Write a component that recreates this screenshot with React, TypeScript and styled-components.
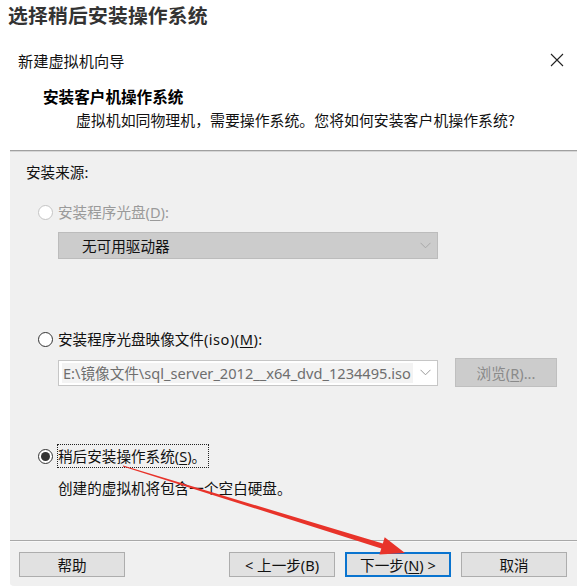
import React from "react";
import styled, { createGlobalStyle } from "styled-components";

const Global = createGlobalStyle`
  html, body { margin: 0; padding: 0; background: #ffffff; }
  body { font-family: "Noto Sans", "Noto Sans CJK SC", sans-serif; }
`;

const FONT = `"Noto Sans", "Noto Sans CJK SC", sans-serif`;

const Page = styled.div`
  position: relative;
  width: 578px;
  height: 587px;
  overflow: hidden;
  background: #ffffff;
  display: flex;
  flex-direction: column;
  font-family: ${FONT};
`;

const PageTitle = styled.div`
  height: 45px;
  box-sizing: border-box;
  padding: 5px 0 0 8px;
  font-family: "Noto Sans CJK SC", sans-serif;
  font-size: 19.8px;
  line-height: 20px;
  font-weight: 700;
  color: #333333;
  letter-spacing: 0.2px;
`;

const DialogBar = styled.div`
  height: 30px;
  display: flex;
  align-items: center;
  justify-content: space-between;
  padding: 0 14px 0 18px;
`;

const DialogName = styled.span`
  font-family: "Noto Sans CJK SC", sans-serif;
  font-size: 15.2px;
  color: #111111;
`;

const CloseIcon = styled.svg`
  width: 14px;
  height: 14px;
`;

const Heading = styled.div`
  margin: 11px 0 0 43px;
  font-family: "Noto Sans CJK SC", sans-serif;
  font-size: 15.6px;
  line-height: 20px;
  font-weight: 700;
  color: #000000;
`;

const SubHeading = styled.div`
  margin: 4px 0 0 76px;
  font-family: "Noto Sans CJK SC", sans-serif;
  font-size: 14.9px;
  line-height: 20px;
  color: #111111;
`;

const Panel = styled.div`
  margin: 20px 1px 0 10px;
  flex: 1;
  background: #f0f0f0;
  border-top: 1px solid #a0a0a0;
  box-shadow: inset 0 1px 0 #d6d6d6;
  display: flex;
  flex-direction: column;
  padding: 11px 0 2px 0;
  border-bottom-left-radius: 4px;
  margin-bottom: 1px;
`;

const Label = styled.div<{ $top: number; $left: number; $muted?: boolean }>`
  margin: ${(p) => p.$top}px 0 0 ${(p) => p.$left}px;
  font-size: 14.6px;
  line-height: 20px;
  color: ${(p) => (p.$muted ? "#9a9a9a" : "#111111")};
`;

const RadioRow = styled.div<{ $top: number; $h?: number }>`
  margin: ${(p) => p.$top}px 0 0 28px;
  height: ${(p) => p.$h ?? 20}px;
  display: flex;
  align-items: center;
  gap: 5px;
`;

const RadioCircle = styled.span<{ $checked?: boolean; $disabled?: boolean }>`
  width: 15px;
  height: 15px;
  box-sizing: border-box;
  border-radius: 50%;
  border: 1px solid ${(p) => (p.$disabled ? "#c4c4c4" : "#333333")};
  background: #ffffff;
  display: flex;
  align-items: center;
  justify-content: center;
  flex-shrink: 0;
  &::after {
    content: "";
    display: ${(p) => (p.$checked ? "block" : "none")};
    width: 9px;
    height: 9px;
    border-radius: 50%;
    background: #333333;
  }
`;

const RadioText = styled.span<{ $muted?: boolean; $focus?: boolean }>`
  font-size: 14.6px;
  line-height: 20px;
  color: ${(p) => (p.$muted ? "#9a9a9a" : "#111111")};
  padding: ${(p) => (p.$focus ? "1px 2px 1px 0" : "0")};
  border: ${(p) => (p.$focus ? "1px dotted #222222" : "none")};
  margin-left: ${(p) => (p.$focus ? "-1px" : "0")};
  u { text-underline-offset: 2px; }
`;

const Latin = styled.span`
  letter-spacing: 0.5px;
`;

const Combo = styled.div<{ $disabled?: boolean }>`
  width: 380px;
  height: 26px;
  box-sizing: border-box;
  display: flex;
  align-items: center;
  justify-content: space-between;
  background: ${(p) => (p.$disabled ? "#cccccc" : "#ffffff")};
  border: 1px solid ${(p) => (p.$disabled ? "#bcbcbc" : "#c6c6c6")};
  padding: 0 6px 0 3px;
`;

const ComboText = styled.span<{ $grey?: boolean }>`
  font-size: 14.6px;
  line-height: 20px;
  white-space: nowrap;
  color: ${(p) => (p.$grey ? "#6e6e6e" : "#111111")};
  background: ${(p) => (p.$grey ? "#f3f3f3" : "transparent")};
  padding-left: ${(p) => (p.$grey ? "1px" : "20px")};
  padding-right: 2px;
`;

const Chevron = styled.svg`
  width: 11px;
  height: 7px;
  flex-shrink: 0;
`;

const ComboWrap = styled.div<{ $top: number }>`
  margin: ${(p) => p.$top}px 0 0 48px;
  display: flex;
  align-items: center;
  gap: 17px;
  height: 29px;
`;

const BrowseButton = styled.div`
  width: 102px;
  height: 29px;
  box-sizing: border-box;
  background: #cccccc;
  border: 1px solid #bfbfbf;
  display: flex;
  align-items: center;
  justify-content: center;
  font-size: 14.6px;
  color: #8a8a8a;
  u { text-underline-offset: 2px; }
`;

const Separator = styled.div<{ $top: number }>`
  margin-top: ${(p) => p.$top}px;
  height: 1px;
  background: #a8a8a8;
  box-shadow: 0 1px 0 #f8f8f8;
`;

const ButtonBar = styled.div`
  margin-top: 11px;
  padding: 0 10px 0 9px;
  display: flex;
  justify-content: space-between;
`;

const ButtonGroup = styled.div`
  display: flex;
  gap: 10px;
`;

const Button = styled.div<{ $primary?: boolean }>`
  width: 106px;
  height: 25px;
  box-sizing: border-box;
  background: #e1e1e1;
  border: ${(p) => (p.$primary ? "2px solid #0a74cf" : "1px solid #adadad")};
  display: flex;
  align-items: center;
  justify-content: center;
  font-size: 14.6px;
  color: #111111;
  white-space: nowrap;
  u { text-underline-offset: 2px; }
`;

const ArrowLayer = styled.svg`
  position: absolute;
  left: 0;
  top: 0;
  width: 578px;
  height: 587px;
  pointer-events: none;
`;

const ChevronIcon = ({ color }: { color: string }) => (
  <Chevron viewBox="0 0 11 7">
    <path d="M0.5 0.8 L5.5 5.8 L10.5 0.8" fill="none" stroke={color} strokeWidth="1" />
  </Chevron>
);

export default function App() {
  // Arrow geometry
  const tail = { x: 123, y: 466 };
  const tip = { x: 405, y: 553 };
  const dx = tip.x - tail.x;
  const dy = tip.y - tail.y;
  const len = Math.hypot(dx, dy);
  const ux = dx / len;
  const uy = dy / len;
  const px = -uy;
  const py = ux;
  const headLen = 24;
  const headHalf = 9;
  const shaftHalf = 2.6;
  const bx = tip.x - ux * headLen;
  const by = tip.y - uy * headLen;
  const pts = [
    [tail.x + px * 0.4, tail.y + py * 0.4],
    [bx + px * shaftHalf, by + py * shaftHalf],
    [bx + px * headHalf, by + py * headHalf],
    [tip.x, tip.y],
    [bx - px * headHalf, by - py * headHalf],
    [bx - px * shaftHalf, by - py * shaftHalf],
    [tail.x - px * 0.4, tail.y - py * 0.4],
  ]
    .map(([x, y]) => `${x.toFixed(1)},${y.toFixed(1)}`)
    .join(" ");

  return (
    <Page>
      <Global />
      <PageTitle>选择稍后安装操作系统</PageTitle>
      <DialogBar>
        <DialogName>新建虚拟机向导</DialogName>
        <CloseIcon viewBox="0 0 14 14">
          <path d="M1 1 L13 13 M13 1 L1 13" stroke="#222" strokeWidth="1.1" />
        </CloseIcon>
      </DialogBar>
      <Heading>安装客户机操作系统</Heading>
      <SubHeading>虚拟机如同物理机，需要操作系统。您将如何安装客户机操作系统?</SubHeading>
      <Panel>
        <Label $top={0} $left={16}>安装来源:</Label>

        <RadioRow $top={20}>
          <RadioCircle $disabled />
          <RadioText $muted>
            安装程序光盘(<u>D</u>):
          </RadioText>
        </RadioRow>
        <ComboWrap $top={9}>
          <Combo $disabled style={{ height: 27 }}>
            <ComboText>无可用驱动器</ComboText>
            <ChevronIcon color="#a8a8a8" />
          </Combo>
        </ComboWrap>

        <RadioRow $top={69}>
          <RadioCircle />
          <RadioText>
            安装程序光盘映像文件<Latin>(iso)(<u>M</u>):</Latin>
          </RadioText>
        </RadioRow>
        <ComboWrap $top={9}>
          <Combo>
            <ComboText $grey>E:\镜像文件\sql_server_2012__x64_dvd_1234495.iso</ComboText>
            <ChevronIcon color="#9a9a9a" />
          </Combo>
          <BrowseButton>
            浏览(<u>R</u>)...
          </BrowseButton>
        </ComboWrap>

        <RadioRow $top={57} $h={24}>
          <RadioCircle $checked />
          <RadioText $focus>
            稍后安装操作系统(<u>S</u>)。
          </RadioText>
        </RadioRow>
        <Label $top={10} $left={48}>创建的虚拟机将包含一个空白硬盘。</Label>

        <Separator $top={42} />
        <ButtonBar>
          <Button>帮助</Button>
          <ButtonGroup>
            <Button>&lt; 上一步(B)</Button>
            <Button $primary>
              下一步(<u>N</u>) &gt;
            </Button>
            <Button>取消</Button>
          </ButtonGroup>
        </ButtonBar>
      </Panel>
      <ArrowLayer viewBox="0 0 578 587">
        <polygon points={pts} fill="#e8332a" />
      </ArrowLayer>
    </Page>
  );
}
